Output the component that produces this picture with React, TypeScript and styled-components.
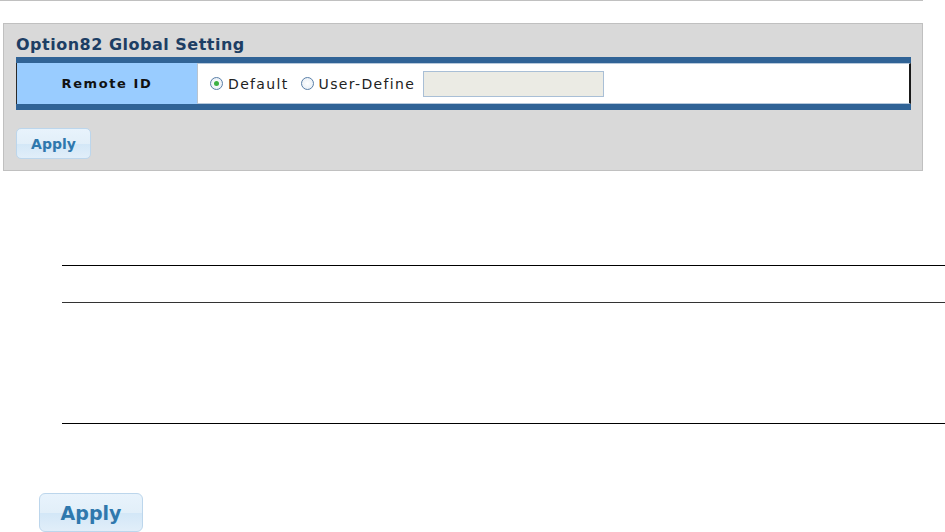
import React from "react";
import styled, { createGlobalStyle } from "styled-components";

const GlobalStyle = createGlobalStyle`
  html, body {
    margin: 0;
    padding: 0;
    background: #ffffff;
    overflow: hidden;
  }
  body {
    font-family: "DejaVu Sans", Verdana, sans-serif;
  }
`;

const Page = styled.div`
  width: 945px;
  height: 532px;
  display: flex;
  flex-direction: column;
`;

const TopRule = styled.div`
  width: 923px;
  height: 1px;
  background: #c0c0c0;
`;

const Panel = styled.section`
  margin: 22px 0 0 3px;
  width: 920px;
  height: 148px;
  background: #d9d9d9;
  border: 1px solid #c0c0c0;
  padding: 0 11px 0 12px;
  box-sizing: border-box;
  display: flex;
  flex-direction: column;
`;

const Title = styled.h2`
  margin: 10px 0 0 0;
  height: 22px;
  font-size: 16px;
  font-weight: bold;
  color: #1d3e64;
  line-height: 22px;
  letter-spacing: 0.5px;
`;

const SettingTable = styled.div`
  margin-top: 1px;
  border-top: 6px solid #306396;
  border-bottom: 6px solid #306396;
  display: flex;
  height: 41px;
`;

const LabelCell = styled.div`
  width: 180px;
  border-left: 1px solid #2a2a2a;
  border-right: 1px solid #b8c4d0;
  background: #99ccff;
  display: flex;
  align-items: center;
  justify-content: center;
  font-size: 13px;
  font-weight: bold;
  letter-spacing: 1.6px;
  color: #111;
`;

const ValueCell = styled.div`
  flex: 1;
  background: #ffffff;
  border-right: 2px solid #1a1a1a;
  border-bottom: 1px solid #b7c9dc;
  border-top: 1px solid #b7c9dc;
  display: flex;
  align-items: center;
  padding-left: 12px;
  font-size: 14px;
  letter-spacing: 1.35px;
  color: #222;
`;

const RadioLabel = styled.label`
  display: flex;
  align-items: center;
  margin-right: 12px;
`;

const RadioDot = styled.span<{ $checked?: boolean }>`
  width: 11px;
  height: 11px;
  border-radius: 50%;
  border: 1px solid #5a7fa8;
  background: radial-gradient(circle, #ffffff 0%, #e3ebf3 100%);
  margin-right: 5px;
  display: flex;
  align-items: center;
  justify-content: center;
  &::after {
    content: "";
    width: 5px;
    height: 5px;
    border-radius: 50%;
    background: ${(p) => (p.$checked ? "#3cb043" : "transparent")};
  }
`;

const TextInput = styled.input`
  width: 181px;
  height: 26px;
  box-sizing: border-box;
  margin-left: -4px;
  background: #ebebe4;
  border: 1px solid #a9bfd6;
  padding: 0 4px;
`;

const ApplyButton = styled.button<{ $big?: boolean }>`
  width: ${(p) => (p.$big ? "104px" : "75px")};
  height: ${(p) => (p.$big ? "39px" : "31px")};
  border: 1px solid #bcd6ec;
  border-radius: ${(p) => (p.$big ? "6px" : "5px")};
  background: linear-gradient(#e8f3fc 0%, #e2eff9 50%, #d3e7f7 52%, #e1eef9 100%);
  color: #2f78ad;
  font-family: "DejaVu Sans", Verdana, sans-serif;
  font-weight: bold;
  font-size: ${(p) => (p.$big ? "19px" : "14px")};
  padding: 0;
  cursor: pointer;
`;

const PanelActions = styled.div`
  margin-top: 18px;
`;

const Lower = styled.div`
  margin: 94px 0 0 62px;
  display: flex;
  flex-direction: column;
`;

const Rule = styled.div<{ $gap: number; $color?: string }>`
  margin-top: ${(p) => p.$gap}px;
  height: 1px;
  background: ${(p) => p.$color || "#000"};
`;

const LowerActions = styled.div`
  margin: 69px 0 0 39px;
`;

export default function App() {
  return (
    <Page>
      <GlobalStyle />
      <TopRule />
      <Panel>
        <Title>Option82 Global Setting</Title>
        <SettingTable>
          <LabelCell>Remote ID</LabelCell>
          <ValueCell>
            <RadioLabel>
              <RadioDot $checked />
              Default
            </RadioLabel>
            <RadioLabel>
              <RadioDot />
              User-Define
            </RadioLabel>
            <TextInput disabled />
          </ValueCell>
        </SettingTable>
        <PanelActions>
          <ApplyButton>Apply</ApplyButton>
        </PanelActions>
      </Panel>
      <Lower>
        <Rule $gap={0} />
        <Rule $gap={36} $color="#333" />
        <Rule $gap={120} />
      </Lower>
      <LowerActions>
        <ApplyButton $big>Apply</ApplyButton>
      </LowerActions>
    </Page>
  );
}
